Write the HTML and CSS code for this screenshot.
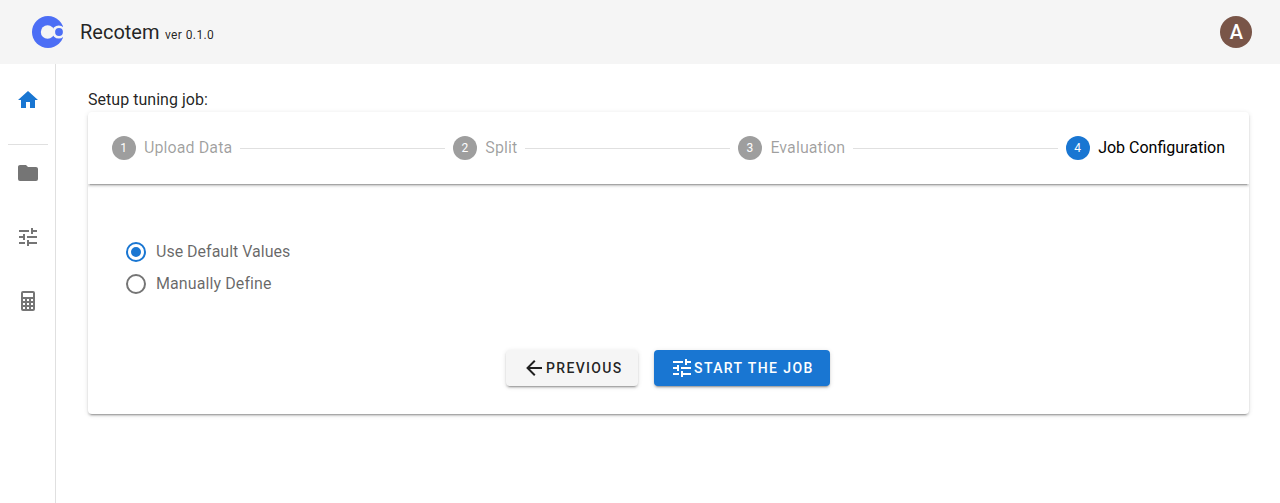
FILE: index.html
```html
<!DOCTYPE html>
<html lang="en">
<head>
<meta charset="utf-8">
<title>Recotem</title>
<link rel="stylesheet" href="styles.css">
</head>
<body>
<header class="app-bar">
  <svg class="logo" viewBox="0 0 32 32">
    <circle class="logo-fill" cx="16" cy="16" r="16"/>
    <circle class="logo-gap" cx="15.6" cy="16" r="6.8"/>
    <circle class="logo-gap" cx="26.8" cy="16" r="6.6"/>
    <circle class="logo-fill" cx="27" cy="16" r="3.9"/>
    <rect class="logo-gap" x="31" y="0" width="1" height="32"/>
  </svg>
  <div class="title">Recotem <span class="version">ver 0.1.0</span></div>
  <div class="avatar">A</div>
</header>
<div class="body">
  <nav class="drawer">
    <a class="nav-item active"><svg class="icon" viewBox="0 0 24 24"><path d="M10,20V14H14V20H19V12H22L12,3L2,12H5V20H10Z"/></svg></a>
    <hr class="divider">
    <a class="nav-item"><svg class="icon" viewBox="0 0 24 24"><path d="M10,4H4C2.89,4 2,4.89 2,6V18A2,2 0 0,0 4,20H20A2,2 0 0,0 22,18V8C22,6.89 21.1,6 20,6H12L10,4Z"/></svg></a>
    <a class="nav-item"><svg class="icon" viewBox="0 0 24 24"><path d="M3,17V19H9V17H3M3,5V7H13V5H3M13,21V19H21V17H13V15H11V21H13M7,9V11H3V13H7V15H9V9H7M21,13V11H11V13H21M15,9H17V7H21V5H17V3H15V9Z"/></svg></a>
    <a class="nav-item"><svg class="icon" viewBox="0 0 24 24"><path d="M7,2H17A2,2 0 0,1 19,4V20A2,2 0 0,1 17,22H7A2,2 0 0,1 5,20V4A2,2 0 0,1 7,2M7,4V8H17V4H7M7,10V12H9V10H7M11,10V12H13V10H11M15,10V12H17V10H15M7,14V16H9V14H7M11,14V16H13V14H11M15,14V16H17V14H15M7,18V20H9V18H7M11,18V20H13V18H11M15,18V20H17V18H15Z"/></svg></a>
  </nav>
  <main class="content">
    <div class="heading">Setup tuning job:</div>
    <section class="stepper">
      <div class="steps">
        <div class="step"><span class="num">1</span><span class="label">Upload Data</span></div>
        <div class="line"></div>
        <div class="step"><span class="num">2</span><span class="label">Split</span></div>
        <div class="line"></div>
        <div class="step"><span class="num">3</span><span class="label">Evaluation</span></div>
        <div class="line"></div>
        <div class="step current"><span class="num">4</span><span>Job Configuration</span></div>
      </div>
      <div class="panel">
        <div class="radios">
          <div class="radio selected"><svg class="icon" viewBox="0 0 24 24"><path d="M12,20A8,8 0 0,1 4,12A8,8 0 0,1 12,4A8,8 0 0,1 20,12A8,8 0 0,1 12,20M12,2A10,10 0 0,0 2,12A10,10 0 0,0 12,22A10,10 0 0,0 22,12A10,10 0 0,0 12,2M12,7A5,5 0 0,0 7,12A5,5 0 0,0 12,17A5,5 0 0,0 17,12A5,5 0 0,0 12,7Z"/></svg><span>Use Default Values</span></div>
          <div class="radio"><svg class="icon" viewBox="0 0 24 24"><path d="M12,20A8,8 0 0,1 4,12A8,8 0 0,1 12,4A8,8 0 0,1 20,12A8,8 0 0,1 12,20M12,2A10,10 0 0,0 2,12A10,10 0 0,0 12,22A10,10 0 0,0 22,12A10,10 0 0,0 12,2Z"/></svg><span class="label">Manually Define</span></div>
        </div>
        <div class="actions">
          <button class="btn previous"><svg class="icon" viewBox="0 0 24 24"><path d="M20,11V13H8L13.5,18.5L12.08,19.92L4.16,12L12.08,4.08L13.5,5.5L7.92,11H20Z"/></svg>PREVIOUS</button>
          <button class="btn primary"><svg class="icon" viewBox="0 0 24 24"><path d="M3,17V19H9V17H3M3,5V7H13V5H3M13,21V19H21V17H13V15H11V21H13M7,9V11H3V13H7V15H9V9H7M21,13V11H11V13H21M15,9H17V7H21V5H17V3H15V9Z"/></svg>START THE JOB</button>
        </div>
      </div>
    </section>
  </main>
</div>
</body>
</html>
```
FILE: styles.css
```css
* { box-sizing: border-box; }
body {
  margin: 0;
  height: 100vh;
  overflow: hidden;
  display: flex;
  flex-direction: column;
  font-family: Roboto, sans-serif;
  font-size: 16px;
  line-height: 24px;
  color: rgba(0, 0, 0, .87);
  background: #fff;
}
.icon { width: 24px; height: 24px; fill: currentColor; flex: none; }
.app-bar {
  height: 64px;
  flex: none;
  display: flex;
  align-items: center;
  padding: 0 28px 0 32px;
  background: #f5f5f5;
}
.logo { width: 32px; height: 32px; margin-right: 16px; }
.logo-fill { fill: #4c6ef5; }
.logo-gap { fill: #f5f5f5; }
.title { padding-top: 2px; font-size: 20px; line-height: 30px; white-space: nowrap; }
.version { margin-left: .5px; font-size: 12px; letter-spacing: .4px; }
.avatar {
  width: 32px;
  height: 32px;
  margin-left: auto;
  padding-left: 1px;
  border-radius: 50%;
  background: #795548;
  color: #fff;
  font-size: 20px;
  font-weight: 500;
  line-height: 33px;
  text-align: center;
}
.body { flex: 1; display: flex; min-height: 0; }
.drawer {
  width: 56px;
  flex: none;
  padding: 8px;
  border-right: 1px solid #e0e0e0;
}
.nav-item {
  display: flex;
  align-items: center;
  justify-content: center;
  width: 40px;
  height: 56px;
  margin-bottom: 8px;
  color: #757575;
}
.nav-item.active { margin-bottom: 16px; color: #1976d2; }
.divider { width: 40px; height: 1px; margin: 0; border: 0; background: #e0e0e0; }
.content { flex: 1; padding: 24px 31px 0 32px; }
.heading { letter-spacing: .03px; }
.stepper {
  height: 302px;
  border-radius: 4px;
  background: #fff;
  box-shadow: 0 3px 1px -2px rgba(0, 0, 0, .2), 0 2px 2px 0 rgba(0, 0, 0, .14), 0 1px 5px 0 rgba(0, 0, 0, .12);
  overflow: hidden;
}
.steps {
  height: 72px;
  display: flex;
  align-items: center;
  padding: 0 24px;
  box-shadow: 0 3px 1px -2px rgba(0, 0, 0, .2), 0 2px 2px 0 rgba(0, 0, 0, .14), 0 1px 5px 0 rgba(0, 0, 0, .12);
}
.step { display: flex; align-items: center; gap: 8px; color: rgba(0, 0, 0, .38); white-space: nowrap; }
.label { letter-spacing: .1px; }
.num {
  width: 24px;
  height: 24px;
  padding-right: 1px;
  border-radius: 50%;
  background: #9e9e9e;
  color: #fff;
  font-size: 12px;
  text-align: center;
}
.current { color: #000; }
.current .num { background: #1976d2; }
.line { flex: 1; height: 1px; margin: 1px 8px 0; background: #e0e0e0; }
.panel { padding: 56px 36px 0; }
.radios { display: flex; flex-direction: column; gap: 8px; }
.radio { display: flex; align-items: center; gap: 8px; height: 24px; color: rgba(0, 0, 0, .6); }
.radio .icon { color: #757575; }
.selected .icon { color: #1976d2; }
.actions { display: flex; justify-content: center; gap: 16px; margin: 54px 1px 0 0; }
.btn {
  height: 36px;
  display: flex;
  align-items: center;
  padding: 0 16px;
  border: 0;
  border-radius: 4px;
  background: #f5f5f5;
  color: rgba(0, 0, 0, .87);
  font: 500 14px Roboto, sans-serif;
  letter-spacing: 1.33px;
  white-space: nowrap;
  box-shadow: 0 3px 1px -2px rgba(0, 0, 0, .2), 0 2px 2px 0 rgba(0, 0, 0, .14), 0 1px 5px 0 rgba(0, 0, 0, .12);
}
.previous { width: 132px; }
.primary { width: 176px; background: #1976d2; color: #fff; letter-spacing: 1.4px; }
```
